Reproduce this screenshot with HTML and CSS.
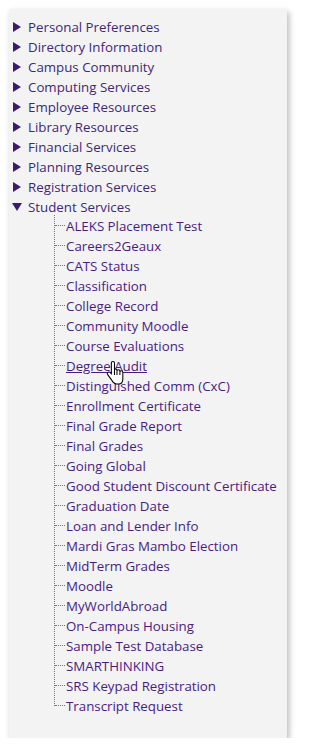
FILE: index.html
```html
<!DOCTYPE html>
<html>
<head>
<meta charset="utf-8">
<link rel="stylesheet" href="styles.css">
</head>
<body>
<div class="panel">
  <ul class="menu">
    <li class="item closed"><span class="tri"></span><a href="#">Personal Preferences</a></li>
    <li class="item closed"><span class="tri"></span><a href="#">Directory Information</a></li>
    <li class="item closed"><span class="tri"></span><a href="#">Campus Community</a></li>
    <li class="item closed"><span class="tri"></span><a href="#">Computing Services</a></li>
    <li class="item closed"><span class="tri"></span><a href="#">Employee Resources</a></li>
    <li class="item closed"><span class="tri"></span><a href="#">Library Resources</a></li>
    <li class="item closed"><span class="tri"></span><a href="#">Financial Services</a></li>
    <li class="item closed"><span class="tri"></span><a href="#">Planning Resources</a></li>
    <li class="item closed"><span class="tri"></span><a href="#">Registration Services</a></li>
    <li class="item open"><span class="tri down"></span><a href="#">Student Services</a></li>
  </ul>
  <ul class="sub">
    <li><a href="#">ALEKS Placement Test</a></li>
    <li><a href="#">Careers2Geaux</a></li>
    <li><a href="#">CATS Status</a></li>
    <li><a href="#">Classification</a></li>
    <li><a href="#">College Record</a></li>
    <li><a href="#">Community Moodle</a></li>
    <li><a href="#">Course Evaluations</a></li>
    <li class="hover"><a href="#">Degree Audit</a>
      <svg class="cursor" width="18" height="24" viewBox="0 0 17 23">
        <path d="M6.5,0.5 C5.7,0.5 5,1.2 5,2 L5,12.2 L3.8,11 C3.2,10.4 2.2,10.4 1.6,11 C1,11.6 1,12.5 1.5,13.1 L5,17.8 C6,19.8 7.5,22 10,22 L12,22 C14.5,22 16,19.8 16,17.2 L16,10.8 C16,10 15.4,9.3 14.6,9.3 C13.8,9.3 13.2,10 13.2,10.8 L13.2,9.8 C13.2,9 12.6,8.3 11.8,8.3 C11,8.3 10.4,9 10.4,9.8 L10.4,9.2 C10.4,8.4 9.8,7.7 9,7.7 C8.4,7.7 8,8.2 8,8.7 L8,2 C8,1.2 7.3,0.5 6.5,0.5 Z" fill="#fff" stroke="#000" stroke-width="1"/>
        <path d="M8,8.7 L8,13.5 M10.4,9.8 L10.4,13.5 M13.2,10.8 L13.2,13.5" fill="none" stroke="#000" stroke-width="1"/>
      </svg>
    </li>
    <li><a href="#">Distinguished Comm (CxC)</a></li>
    <li><a href="#">Enrollment Certificate</a></li>
    <li><a href="#">Final Grade Report</a></li>
    <li><a href="#">Final Grades</a></li>
    <li><a href="#">Going Global</a></li>
    <li><a href="#">Good Student Discount Certificate</a></li>
    <li><a href="#">Graduation Date</a></li>
    <li><a href="#">Loan and Lender Info</a></li>
    <li><a href="#">Mardi Gras Mambo Election</a></li>
    <li><a href="#">MidTerm Grades</a></li>
    <li><a href="#">Moodle</a></li>
    <li><a href="#">MyWorldAbroad</a></li>
    <li><a href="#">On-Campus Housing</a></li>
    <li><a href="#">Sample Test Database</a></li>
    <li><a href="#">SMARTHINKING</a></li>
    <li><a href="#">SRS Keypad Registration</a></li>
    <li><a href="#">Transcript Request</a></li>
  </ul>
</div>
</body>
</html>
```
FILE: styles.css
```css
html, body {
  margin: 0;
  padding: 0;
  background: #ffffff;
}
body {
  font-family: "Open Sans", "Noto Sans", "Liberation Sans", sans-serif;
  font-size: 13.3px;
}
.panel {
  margin: 9px 0 0 9px;
  width: 278px;
  height: 729px;
  box-sizing: border-box;
  background: #f3f3f3;
  box-shadow: 2px 3px 6px rgba(0,0,0,0.28);
  padding-top: 8px;
}
ul {
  list-style: none;
  margin: 0;
  padding: 0;
}
a {
  text-decoration: none;
}
.menu .item {
  display: flex;
  align-items: center;
  height: 20px;
  padding-left: 4px;
}
.menu a {
  color: #3d2879;
}
.tri {
  width: 0;
  height: 0;
  border-top: 5px solid transparent;
  border-bottom: 5px solid transparent;
  border-left: 8px solid #3a1a72;
  margin-right: 7px;
}
.tri.down {
  border-left: 5px solid transparent;
  border-right: 5px solid transparent;
  border-top: 8px solid #3a1a72;
  border-bottom: 0;
  margin-left: -1px;
  margin-right: 6px;
}
.sub {
  margin-left: 45px;
  margin-top: -1px;
}
.sub li {
  position: relative;
  height: 20px;
  line-height: 20px;
  padding-left: 12px;
}
.sub li::before {
  content: "";
  position: absolute;
  left: 0;
  top: -1px;
  height: 21px;
  border-left: 1px dotted #777;
}
.sub li:last-child::before {
  height: 11px;
}
.sub li::after {
  content: "";
  position: absolute;
  left: 1px;
  top: 9px;
  width: 10px;
  border-top: 1px dotted #777;
}
.sub a {
  color: #481c85;
}
.sub li.hover a {
  text-decoration: underline;
}
.cursor {
  position: absolute;
  left: 52px;
  top: 5px;
  z-index: 2;
}
```
